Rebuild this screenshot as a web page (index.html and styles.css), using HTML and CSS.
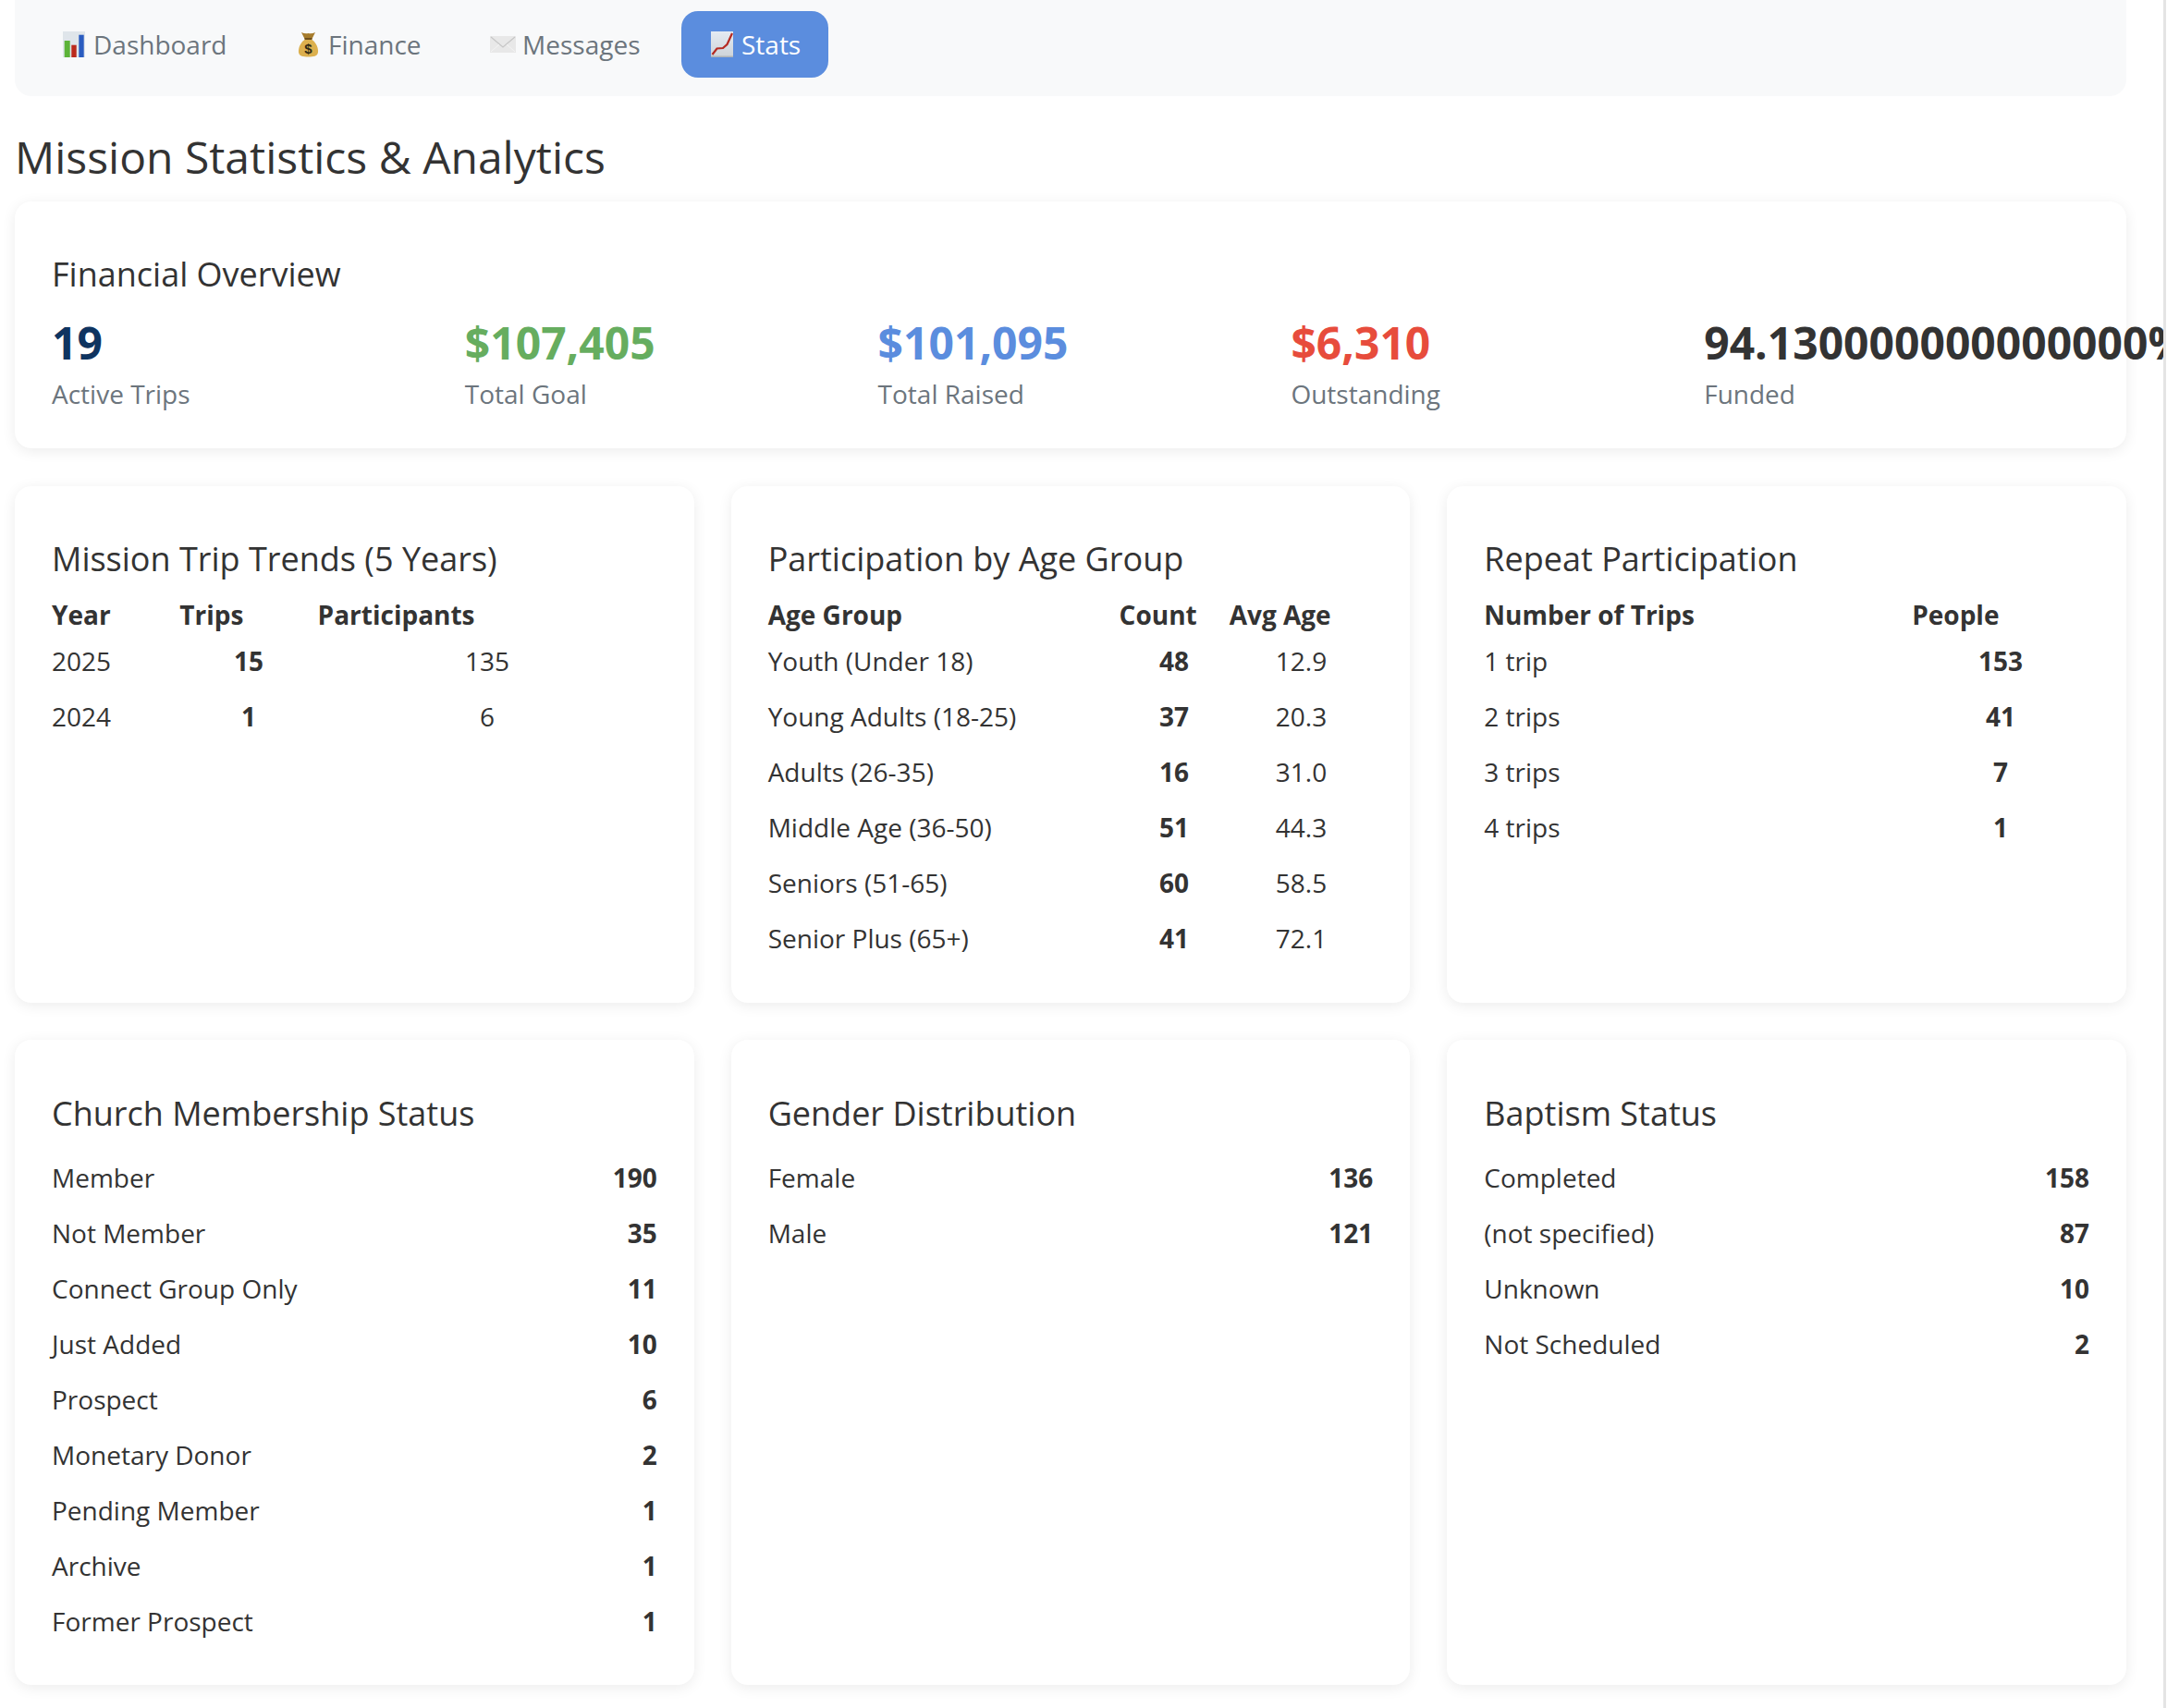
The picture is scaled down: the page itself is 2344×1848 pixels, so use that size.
FILE: index.html
```html
<!DOCTYPE html>
<html lang="en">
<head>
<meta charset="UTF-8">
<meta name="viewport" content="width=device-width, initial-scale=1.0">
<title>Mission Statistics</title>
<link rel="stylesheet" href="styles.css">
</head>
<body>

<div class="page">
    <nav class="tabs">
        <a class="tab">
            <svg class="icon" viewBox="0 0 28 28"><rect x="2" width="24" height="28" fill="#dfe5ea"/><rect x="3.7" y="10" width="6" height="18" fill="#5cb338"/><rect x="11.3" y="14.7" width="5.4" height="13.3" fill="#bb2a1c"/><rect x="19.3" y="3.7" width="5.4" height="24.3" fill="#2a5cc0"/></svg>
            <span>Dashboard</span>
        </a>
        <a class="tab">
            <svg class="icon" viewBox="0 0 28 28"><path d="M6 1 Q10 3 13.5 2 Q17 3 21 1 L17.5 8 L9.5 8 Z" fill="#a67c2c"/><path d="M9.5 7 H17.5 V9.5 H9.5 Z" fill="#6f4f1c"/><path d="M9.5 9 H17.5 C22 12 24.5 18 24 22.5 C23.5 27 19 27.5 13.5 27.5 C8 27.5 3.5 27 3 22.5 C2.5 18 5 12 9.5 9 Z" fill="#dcb04e"/><text x="13.5" y="24" class="bag-sign">$</text></svg>
            <span>Finance</span>
        </a>
        <a class="tab">
            <svg class="icon" viewBox="0 0 28 28"><rect y="5" width="28" height="18" fill="#e8e8e8"/><path d="M1 6 L14 17 L27 6" fill="none" stroke="#c6c6c6" stroke-width="1.2"/><path d="M1 22 L10 14 M27 22 L18 14" stroke="#f4f4f4" stroke-width="1"/></svg>
            <span>Messages</span>
        </a>
        <a class="tab active">
            <svg class="icon" viewBox="0 0 28 28"><defs><linearGradient id="chartBg" x1="0" y1="0" x2="0" y2="1"><stop offset="0" stop-color="#e4ebf3"/><stop offset="1" stop-color="#ced3d8"/></linearGradient></defs><rect x="2" width="24" height="28" fill="url(#chartBg)"/><rect x="2" y="26.5" width="24" height="1.5" fill="#aeb3b8"/><path d="M3.5 25 L8.5 18.5 L15 18 L19.5 14 L25 2" fill="none" stroke="#b52a22" stroke-width="2.2"/></svg>
            <span>Stats</span>
        </a>
    </nav>

    <h1>Mission Statistics &amp; Analytics</h1>

    <section class="card overview">
        <h2>Financial Overview</h2>
        <div class="stats">
            <div><div class="stat-value navy">19</div><div class="stat-label">Active Trips</div></div>
            <div><div class="stat-value green">$107,405</div><div class="stat-label">Total Goal</div></div>
            <div><div class="stat-value blue">$101,095</div><div class="stat-label">Total Raised</div></div>
            <div><div class="stat-value red">$6,310</div><div class="stat-label">Outstanding</div></div>
            <div><div class="stat-value">94.130000000000000%</div><div class="stat-label">Funded</div></div>
        </div>
    </section>

    <div class="grid">
        <section class="card">
            <h2>Mission Trip Trends (5 Years)</h2>
            <table>
                <thead><tr><th>Year</th><th>Trips</th><th>Participants</th></tr></thead>
                <tbody>
                    <tr><td>2025</td><td class="num"><b>15</b></td><td class="num">135</td></tr>
                    <tr><td>2024</td><td class="num"><b>1</b></td><td class="num">6</td></tr>
                </tbody>
            </table>
        </section>
        <section class="card">
            <h2>Participation by Age Group</h2>
            <table>
                <thead><tr><th>Age Group</th><th>Count</th><th>Avg Age</th></tr></thead>
                <tbody>
                    <tr><td>Youth (Under 18)</td><td class="num"><b>48</b></td><td class="num">12.9</td></tr>
                    <tr><td>Young Adults (18-25)</td><td class="num"><b>37</b></td><td class="num">20.3</td></tr>
                    <tr><td>Adults (26-35)</td><td class="num"><b>16</b></td><td class="num">31.0</td></tr>
                    <tr><td>Middle Age (36-50)</td><td class="num"><b>51</b></td><td class="num">44.3</td></tr>
                    <tr><td>Seniors (51-65)</td><td class="num"><b>60</b></td><td class="num">58.5</td></tr>
                    <tr><td>Senior Plus (65+)</td><td class="num"><b>41</b></td><td class="num">72.1</td></tr>
                </tbody>
            </table>
        </section>
        <section class="card">
            <h2>Repeat Participation</h2>
            <table>
                <thead><tr><th>Number of Trips</th><th>People</th></tr></thead>
                <tbody>
                    <tr><td>1 trip</td><td class="num"><b>153</b></td></tr>
                    <tr><td>2 trips</td><td class="num"><b>41</b></td></tr>
                    <tr><td>3 trips</td><td class="num"><b>7</b></td></tr>
                    <tr><td>4 trips</td><td class="num"><b>1</b></td></tr>
                </tbody>
            </table>
        </section>
    </div>

    <div class="grid">
        <section class="card">
            <h2>Church Membership Status</h2>
            <div class="row"><span>Member</span><b>190</b></div>
            <div class="row"><span>Not Member</span><b>35</b></div>
            <div class="row"><span>Connect Group Only</span><b>11</b></div>
            <div class="row"><span>Just Added</span><b>10</b></div>
            <div class="row"><span>Prospect</span><b>6</b></div>
            <div class="row"><span>Monetary Donor</span><b>2</b></div>
            <div class="row"><span>Pending Member</span><b>1</b></div>
            <div class="row"><span>Archive</span><b>1</b></div>
            <div class="row"><span>Former Prospect</span><b>1</b></div>
        </section>
        <section class="card">
            <h2>Gender Distribution</h2>
            <div class="row"><span>Female</span><b>136</b></div>
            <div class="row"><span>Male</span><b>121</b></div>
        </section>
        <section class="card">
            <h2>Baptism Status</h2>
            <div class="row"><span>Completed</span><b>158</b></div>
            <div class="row"><span>(not specified)</span><b>87</b></div>
            <div class="row"><span>Unknown</span><b>10</b></div>
            <div class="row"><span>Not Scheduled</span><b>2</b></div>
        </section>
    </div>
</div>

</body>
</html>
```

FILE: styles.css
```css
html, body {
    margin: 0;
    padding: 0;
    height: 1848px;
    overflow: hidden;
    background: #fff;
}
body {
    width: 2343px;
    box-sizing: border-box;
    border-right: 3px solid #e4e4e4;
    font-family: "Open Sans", sans-serif;
    font-size: 28px;
    color: #333;
}
.page {
    width: 2284px;
    margin-left: 16px;
}
.tabs {
    display: flex;
    gap: 14.5px;
    height: 104px;
    box-sizing: border-box;
    padding: 12px 20px 0;
    background: #f8f9fa;
    border-radius: 0 0 18px 18px;
}
.tab {
    display: flex;
    align-items: center;
    gap: 7px;
    height: 72px;
    padding: 0 30px;
    border-radius: 18px;
    color: #6c757d;
    white-space: nowrap;
}
.tab.active {
    background: #5b8dde;
    color: #fff;
}
.icon {
    width: 28px;
    height: 28px;
}
.bag-sign {
    font-family: "Liberation Sans", sans-serif;
    font-size: 15px;
    font-weight: 700;
    fill: #2f2a14;
    text-anchor: middle;
}
h1 {
    margin: 36px 0 18px;
    font-size: 48px;
    font-weight: 400;
    line-height: 60px;
}
h2 {
    margin: 0 0 15px;
    font-size: 36px;
    font-weight: 400;
    line-height: 48px;
}
.card {
    padding: 55px 40px 40px;
    background: #fff;
    border-radius: 18px;
    box-shadow: 0 3px 15px rgba(0, 0, 0, 0.08);
}
.overview {
    height: 267px;
    box-sizing: border-box;
}
.overview h2 {
    margin-bottom: 20px;
}
.stats {
    display: grid;
    grid-template-columns: repeat(5, minmax(0, 1fr));
    gap: 30px;
}
.stat-value {
    font-size: 48px;
    font-weight: 700;
    line-height: 60px;
    white-space: nowrap;
}
.stat-label {
    margin-top: 4px;
    color: #6c757d;
    line-height: 42px;
}
.navy { color: #0f3460; }
.green { color: #66ad5f; }
.blue { color: #5b8dde; }
.red { color: #e74c3c; }
.grid {
    display: grid;
    grid-template-columns: repeat(3, 1fr);
    gap: 40px;
    margin-top: 41px;
}
.grid + .grid {
    margin-top: 40px;
}
.grid + .grid .card {
    padding: 56px 40px 39px;
}
table {
    width: 100%;
    border-collapse: collapse;
}
th {
    padding: 2px 0 0;
    text-align: left;
    font-weight: 700;
    line-height: 39px;
}
td {
    padding: 9px 0;
    line-height: 42px;
}
td.num {
    text-align: center;
}
.row {
    display: flex;
    justify-content: space-between;
    align-items: center;
    height: 60px;
}
```
